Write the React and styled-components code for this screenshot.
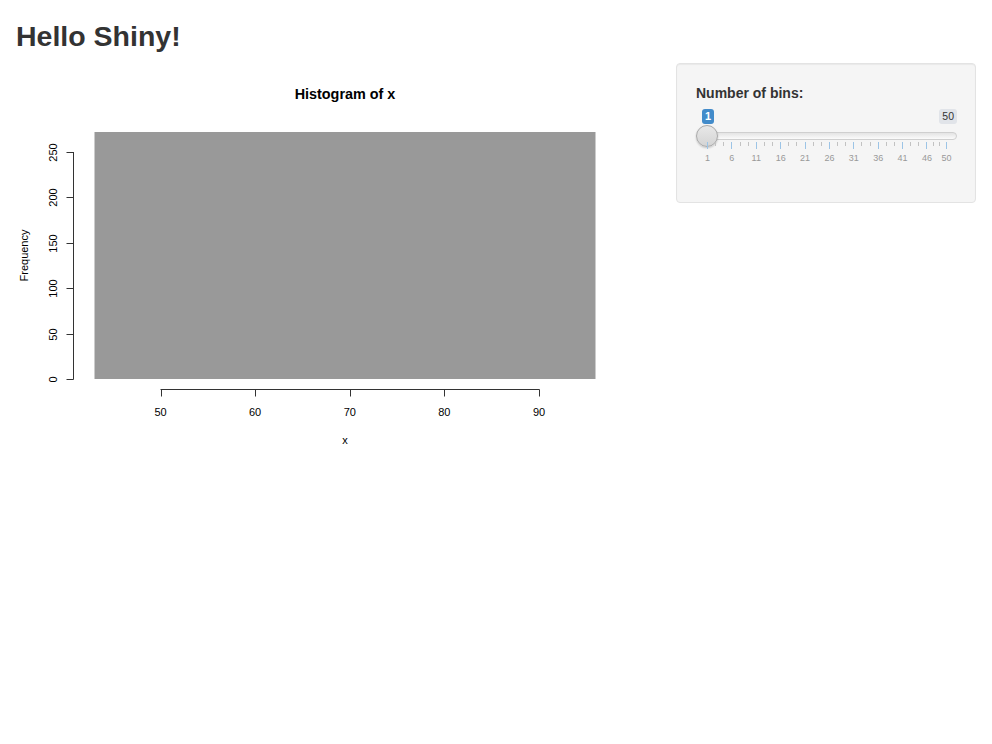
import React from "react";
import styled, { createGlobalStyle } from "styled-components";

const GlobalStyle = createGlobalStyle`
  html, body {
    margin: 0;
    padding: 0;
    background: #fff;
  }
  body {
    font-family: "Liberation Sans", Arial, sans-serif;
    font-size: 14px;
    line-height: 20px;
    color: #333;
  }
`;

const Page = styled.div`
  padding: 0 16px 0 15px;
`;

const Title = styled.h1`
  margin: 0;
  padding: 21px 0 0 1px;
  font-size: 28.5px;
  line-height: 30px;
  font-weight: bold;
  color: #333;
`;

const Row = styled.div`
  display: flex;
  justify-content: space-between;
  align-items: flex-start;
  padding-top: 12px;
`;

const Main = styled.div`
  flex: 0 0 620px;
`;

const Well = styled.div`
  width: 300px;
  box-sizing: border-box;
  min-height: 140px;
  padding: 19px;
  background: #f5f5f5;
  border: 1px solid #e3e3e3;
  border-radius: 4px;
  box-shadow: inset 0 1px 1px rgba(0, 0, 0, 0.05);
`;

const Label = styled.label`
  display: block;
  font-weight: bold;
  font-size: 14px;
  line-height: 20px;
  margin: 0 0 2px;
`;

const Slider = styled.div`
  display: flex;
  flex-direction: column;
  width: 261px;
`;

const BadgeRow = styled.div`
  display: flex;
  justify-content: space-between;
  align-items: center;
  margin-top: 4px;
  padding-left: 6px;
`;

const Badge = styled.span`
  height: 15px;
  padding: 0 3px;
  border-radius: 3px;
  font-size: ${(p) => (p.$active ? "11px" : "10.5px")};
  line-height: 15px;
  background: ${(p) => (p.$active ? "#428bca" : "#e1e4e9")};
  color: ${(p) => (p.$active ? "#fff" : "#333")};
  font-weight: ${(p) => (p.$active ? "bold" : "normal")};
`;

const Rail = styled.div`
  position: relative;
  height: 22px;
  margin-top: 1px;
`;

const Track = styled.div`
  height: 6px;
  margin: 7px 0 0 1px;
  border: 1px solid #cfcfcf;
  border-radius: 4px;
  background: linear-gradient(#e4e4e4, #fbfbfb);
`;

const Handle = styled.div`
  position: absolute;
  left: 0;
  top: 0;
  width: 20px;
  height: 20px;
  border-radius: 50%;
  border: 1px solid #a9a9a9;
  background: linear-gradient(#e8e8e8, #d4d4d4);
  box-shadow: 0 1px 2px rgba(0, 0, 0, 0.2);
`;

const Grid = styled.div`
  position: relative;
  height: 22px;
  margin-top: -5px;
`;

const Tick = styled.span`
  position: absolute;
  top: 0;
  width: 1px;
  height: ${(p) => (p.$major ? "7px" : "4px")};
  background: ${(p) => (p.$major ? "#9cc4e6" : "#c2c2c2")};
`;

const TickLabel = styled.span`
  position: absolute;
  top: 11px;
  width: 30px;
  margin-left: -15px;
  text-align: center;
  font-size: 9px;
  line-height: 10px;
  color: #999;
`;

const majors = [1, 6, 11, 16, 21, 26, 31, 36, 41, 46, 50];
const xOf = (v) => 11 + ((v - 1) * 239) / 49;

function BinsSlider() {
  const minors = [];
  for (let i = 0; i < majors.length - 1; i++) {
    const a = majors[i];
    const b = majors[i + 1];
    minors.push(a + (b - a) / 3, a + ((b - a) * 2) / 3);
  }
  return (
    <Slider>
      <BadgeRow>
        <Badge $active>1</Badge>
        <Badge>50</Badge>
      </BadgeRow>
      <Rail>
        <Track />
        <Handle />
      </Rail>
      <Grid>
        {minors.map((v) => (
          <Tick key={"m" + v} style={{ left: Math.round(xOf(v)) }} />
        ))}
        {majors.map((v) => (
          <Tick key={"M" + v} $major style={{ left: Math.round(xOf(v)) }} />
        ))}
        {majors.map((v) => (
          <TickLabel key={"L" + v} style={{ left: xOf(v) + 0.5 }}>
            {v}
          </TickLabel>
        ))}
      </Grid>
    </Slider>
  );
}

const PlotSvg = styled.svg`
  display: block;
  font-family: "Liberation Sans", Arial, sans-serif;
  text {
    fill: #000;
  }
`;

function Histogram() {
  const y0 = 316;
  const perUnit = 45.4 / 50;
  const yTicks = [0, 50, 100, 150, 200, 250];
  const xTicks = [50, 60, 70, 80, 90];
  const xOfVal = (v) => 145.5 + ((v - 50) * 378.5) / 40;
  return (
    <PlotSvg width="620" height="400" viewBox="0 0 620 400">
      <text x="330" y="36" textAnchor="middle" fontSize="14.4" fontWeight="bold">
        Histogram of x
      </text>
      <rect x="79.5" y="69" width="501" height="247" fill="#999999" />
      <g stroke="#333" strokeWidth="1" fill="none">
        <line x1="58.5" y1={y0 - 250 * perUnit} x2="58.5" y2={y0 + 0.5} />
        {yTicks.map((t) => (
          <line
            key={t}
            x1="51.5"
            x2="58.5"
            y1={Math.round(y0 - t * perUnit) + 0.5}
            y2={Math.round(y0 - t * perUnit) + 0.5}
          />
        ))}
        <line x1="145.5" y1="326.5" x2="524.5" y2="326.5" />
        {xTicks.map((t) => (
          <line
            key={t}
            x1={Math.round(xOfVal(t)) + 0.5}
            x2={Math.round(xOfVal(t)) + 0.5}
            y1="326.5"
            y2="333.5"
          />
        ))}
      </g>
      {yTicks.map((t) => {
        const y = Math.round(y0 - t * perUnit) + 0.5;
        return (
          <text
            key={t}
            x="42"
            y={y}
            fontSize="11"
            textAnchor="middle"
            transform={`rotate(-90 42 ${y})`}
          >
            {t}
          </text>
        );
      })}
      {xTicks.map((t) => (
        <text key={t} x={xOfVal(t)} y="353" fontSize="11" textAnchor="middle">
          {t}
        </text>
      ))}
      <text
        x="13"
        y="192.5"
        fontSize="11"
        textAnchor="middle"
        transform="rotate(-90 13 192.5)"
      >
        Frequency
      </text>
      <text x="330" y="381" fontSize="11" textAnchor="middle">
        x
      </text>
    </PlotSvg>
  );
}

export default function App() {
  return (
    <>
      <GlobalStyle />
      <Page>
        <Title>Hello Shiny!</Title>
        <Row>
          <Main>
            <Histogram />
          </Main>
          <Well>
            <Label>Number of bins:</Label>
            <BinsSlider />
          </Well>
        </Row>
      </Page>
    </>
  );
}
